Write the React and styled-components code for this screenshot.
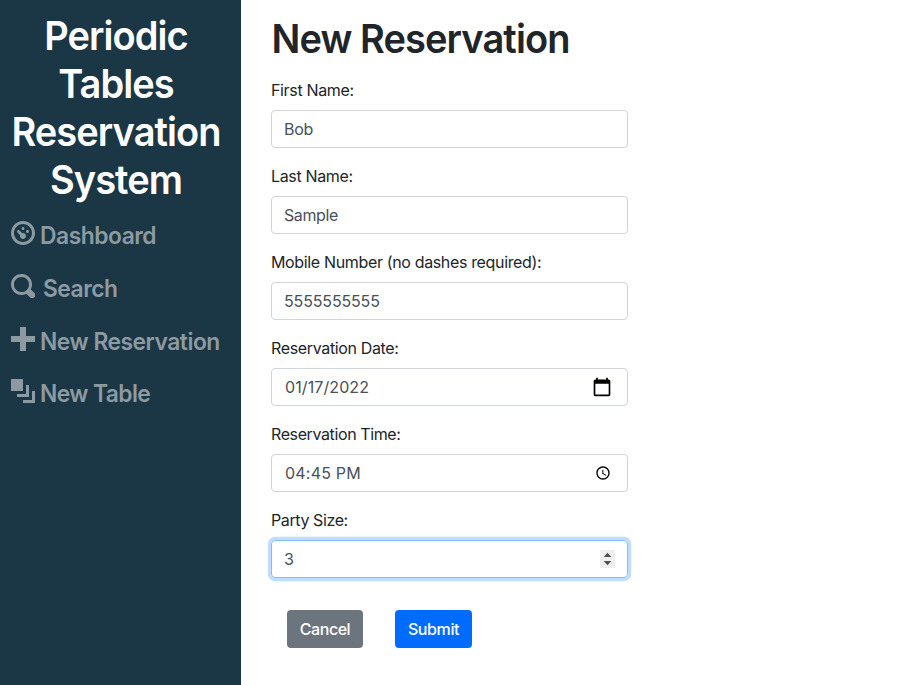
import React from "react";
import styled, { createGlobalStyle } from "styled-components";

const GlobalStyle = createGlobalStyle`
  *, *::before, *::after { box-sizing: border-box; }
  body {
    margin: 0;
    background: #fff;
    color: #212529;
    font-family: Inter, "Liberation Sans", sans-serif;
    font-size: 16px;
    line-height: 24px;
  }
`;

const Page = styled.div`
  display: flex;
  height: 685px;
  overflow: hidden;
`;

const Sidebar = styled.aside`
  flex: 0 0 241px;
  padding: 12px 9px 0 0;
  background: #1b3644;
`;

const Brand = styled.h1`
  margin: 0;
  color: #fff;
  font-size: 40px;
  font-weight: 600;
  line-height: 48px;
  text-align: center;
`;

const BrandLine = styled.span`
  display: block;
  letter-spacing: -0.97px;
  transform: scaleX(0.95);
`;

const Nav = styled.nav`
  display: flex;
  flex-direction: column;
  padding: 17px 0 0 11px;
`;

const NavLink = styled.a`
  display: flex;
  gap: ${(p) => p.$gap}px;
  height: 52.75px;
  color: #8d9aa1;
  font-size: 24px;
  font-weight: 600;
  line-height: 30px;
  letter-spacing: ${(p) => p.$track}px;
  white-space: nowrap;
`;

const NavText = styled.span`
  transform: scaleX(0.95);
  transform-origin: left;
`;

const NavIcon = styled.svg`
  flex: none;
  width: 24px;
  height: 24px;
  fill: currentColor;
`;

const Main = styled.main`
  flex: 1;
  padding: 15px 0 0 30px;
`;

const Title = styled.h1`
  margin: 0 0 15px;
  font-size: 40px;
  font-weight: 600;
  line-height: 48px;
  letter-spacing: -0.95px;
  text-indent: 0.5px;
  transform: scaleX(0.95);
  transform-origin: left;
`;

const Field = styled.div`
  width: 357px;
  margin-bottom: 16px;
`;

const Label = styled.div`
  margin-bottom: 8px;
  letter-spacing: ${(p) => p.$track}px;
  white-space: nowrap;
`;

const Control = styled.div`
  display: flex;
  align-items: center;
  justify-content: space-between;
  height: 38px;
  padding: 0 12px 0 ${(p) => p.$inset || 12}px;
  border: 1px solid ${(p) => (p.$focused ? "#80bdff" : "#ced4da")};
  border-radius: 4px;
  box-shadow: ${(p) => (p.$focused ? "0 0 0 3.2px rgba(0, 123, 255, 0.25)" : "none")};
  color: #495057;
  letter-spacing: ${(p) => p.$track}px;
`;

const ControlIcon = styled.svg`
  flex: none;
  color: #000;
  margin-right: ${(p) => p.$right || 0}px;
`;

const Actions = styled.div`
  display: flex;
  gap: 32px;
  padding: 16px;
`;

const Button = styled.button`
  width: ${(p) => p.$width}px;
  height: 38px;
  padding: 0;
  border: 0;
  border-radius: 4px;
  background: ${(p) => p.$color};
  color: #fff;
  font: inherit;
  font-weight: 500;
  letter-spacing: ${(p) => p.$track}px;
`;

const navItems = [
  {
    text: "Dashboard",
    gap: 5.4,
    track: -0.48,
    path: "M4 0c-2.2 0-4 1.8-4 4s1.8 4 4 4 4-1.8 4-4-1.8-4-4-4zm0 1c1.66 0 3 1.34 3 3s-1.34 3-3 3-3-1.34-3-3 1.34-3 3-3zm0 1c-.28 0-.5.22-.5.5s.22.5.5.5.5-.22.5-.5-.22-.5-.5-.5zm-1.66 1a.5.5 0 0 0-.19.84l.91.91c-.02.08-.06.16-.06.25 0 .55.45 1 1 1s1-.45 1-1-.45-1-1-1c-.09 0-.17.04-.25.06l-.91-.91a.5.5 0 0 0-.44-.16.5.5 0 0 0-.06 0zm3.16 0c-.28 0-.5.22-.5.5s.22.5.5.5.5-.22.5-.5-.22-.5-.5-.5z",
  },
  {
    text: "Search",
    gap: 8.4,
    track: -0.5,
    path: "M3.5 0c-1.93 0-3.5 1.57-3.5 3.5s1.57 3.5 3.5 3.5c.59 0 1.17-.14 1.66-.41a1 1 0 0 0 .13.13l1 1a1.02 1.02 0 1 0 1.44-1.44l-1-1a1 1 0 0 0-.16-.13c.27-.49.44-1.06.44-1.66 0-1.93-1.55-3.5-3.5-3.5zm0 1c1.39 0 2.5 1.11 2.5 2.5 0 .66-.24 1.27-.66 1.72l-.03.03a1 1 0 0 0-.13.13c-.44.4-1.04.63-1.69.63-1.39 0-2.5-1.11-2.5-2.5s1.11-2.5 2.5-2.5z",
  },
  { text: "New Reservation", gap: 5.4, track: -0.5, path: "M3 0v3h-3v2h3v3h2v-3h3v-2h-3v-3h-2z" },
  {
    text: "New Table",
    gap: 5.4,
    track: -0.62,
    path: "M0 0v4h4v-4h-4zm5 2v3h-3v1h4v-4h-1zm2 2v3h-3v1h4v-4h-1z",
  },
];

const CalendarIcon = () => (
  <ControlIcon $right={3} width="20" height="20" viewBox="0 0 24 24" fill="currentColor">
    <path d="M20 3h-1V1h-2v2H7V1H5v2H4c-1.1 0-2 .9-2 2v16c0 1.1.9 2 2 2h16c1.1 0 2-.9 2-2V5c0-1.1-.9-2-2-2zm0 18H4V8h16v13z" />
  </ControlIcon>
);

const ClockIcon = () => (
  <ControlIcon $right={4} width="16" height="16" viewBox="0 0 24 24" fill="currentColor">
    <path d="M11.99 2C6.47 2 2 6.48 2 12s4.47 10 9.99 10C17.52 22 22 17.52 22 12S17.52 2 11.99 2zM12 20c-4.42 0-8-3.58-8-8s3.58-8 8-8 8 3.58 8 8-3.58 8-8 8z" />
    <path d="M12.5 7H11v6l5.25 3.15.75-1.23-4.5-2.67z" />
  </ControlIcon>
);

const Spinner = () => (
  <ControlIcon width="15" height="18" viewBox="0 0 15 18">
    <rect width="15" height="18" fill="#efefef" />
    <path d="M7.5 2.7 11.3 7H3.7zM7.5 15.3 11.3 11H3.7z" fill="#505050" />
  </ControlIcon>
);

const fields = [
  { label: "First Name:", value: "Bob", lt: -0.35, vt: -0.3 },
  { label: "Last Name:", value: "Sample", lt: -0.35, vt: -0.4 },
  { label: "Mobile Number (no dashes required):", value: "5555555555", lt: -0.35, vt: -0.15 },
  { label: "Reservation Date:", value: "01/17/2022", lt: -0.35, vt: 0.1, inset: 13, icon: <CalendarIcon /> },
  { label: "Reservation Time:", value: "04:45 PM", lt: -0.39, vt: 0.2, inset: 13, icon: <ClockIcon /> },
  { label: "Party Size:", value: "3", lt: -0.4, vt: 0, focused: true, icon: <Spinner /> },
];

export default function App() {
  return (
    <Page>
      <GlobalStyle />
      <Sidebar>
        <Brand>
          <BrandLine>Periodic</BrandLine>
          <BrandLine>Tables</BrandLine>
          <BrandLine>Reservation</BrandLine>
          <BrandLine>System</BrandLine>
        </Brand>
        <Nav>
          {navItems.map((item) => (
            <NavLink key={item.text} $gap={item.gap} $track={item.track}>
              <NavIcon viewBox="0 0 8 8">
                <path d={item.path} />
              </NavIcon>
              <NavText>{item.text}</NavText>
            </NavLink>
          ))}
        </Nav>
      </Sidebar>
      <Main>
        <Title>New Reservation</Title>
        {fields.map((f) => (
          <Field key={f.label}>
            <Label $track={f.lt}>{f.label}</Label>
            <Control $focused={f.focused} $inset={f.inset} $track={f.vt}>
              <span>{f.value}</span>
              {f.icon}
            </Control>
          </Field>
        ))}
        <Actions>
          <Button $width={76} $color="#6c757d" $track={-0.45}>Cancel</Button>
          <Button $width={77} $color="#006bff" $track={-0.4}>Submit</Button>
        </Actions>
      </Main>
    </Page>
  );
}
